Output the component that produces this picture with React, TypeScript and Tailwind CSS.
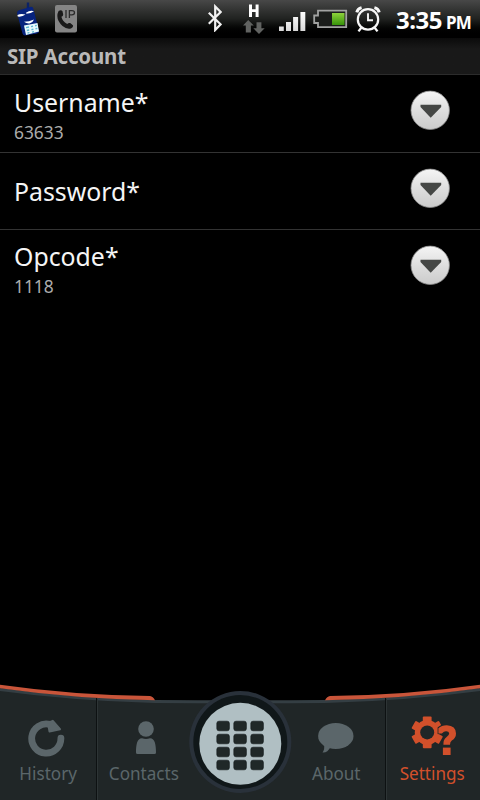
import type { ReactNode } from "react";

const rows = [
  { label: "Username*", value: "63633" },
  { label: "Password*", value: "" },
  { label: "Opcode*", value: "1118" },
];

function SoftphoneIcon() {
  return (
    <svg className="h-9 w-6" viewBox="0 0 24 36">
      <path d="M12 2.5 L12 11" stroke="#0c2266" strokeWidth="2.4" />
      <path d="M1 13 Q1 11 3 10.2 L15 6.8 Q17 6.6 17.3 8.5 L23 31 Q23 33 21 33.5 L9 35.5 Q7 35.5 6.5 33.5 Z" fill="#08237d" />
      <path d="M1.5 15 Q5 13.2 9.5 14.6 Q6 17.2 1.7 16.5 Z M10 12.7 Q14 10 18 11.2 Q15 13.6 10.5 13.8 Z" fill="#fff" />
      <path d="M8 21.8 Q13 21.6 18 19.4 Q17 22.4 13.5 23.5 Q10.5 23.8 8 21.8 Z" fill="#fff" />
      <path d="M8 25.4 L21.5 22.9 L23 31.5 L10 35 Z" fill="#e9fafc" />
      <path d="M10 27.6 l3-.6 M15 26.6 l2-.4 M19 25.8 l1.8-.4 M10.8 30.5 l2.4-.5 M15.4 29.6 l2-.4 M19.5 28.8 l1.8-.4 M11.5 33 l2-.4 M16 32.1 l2-.4" stroke="#5fb8d2" strokeWidth="1.4" />
    </svg>
  );
}

function IpCallIcon() {
  return (
    <svg className="h-7 w-[22px]" viewBox="0 0 22 28">
      <rect width="22" height="27.5" rx="2" fill="#858585" />
      <path d="M3.6 5.9 Q6 4.4 7.4 6 L8.2 9.4 Q8.2 11 6.4 11.8 Q7.2 16 12.2 19 Q13.6 17.4 15.2 18.1 L17.9 20.3 Q18.6 22 16.3 23.3 Q12.5 25 7.5 21 Q-.2 13.5 3.6 5.9Z" fill="#191919" />
      <path d="M11 5v8 M14.4 13V5.7 h2.5 q2.6 0 2.6 2 t-2.6 2.1 h-2.5" fill="none" stroke="#2b2b2b" strokeWidth="1.3" />
    </svg>
  );
}

function StatusBar() {
  return (
    <header className="flex h-[38px] shrink-0 items-start bg-linear-to-b from-[#484848] via-[#202220] via-50% to-black to-95%">
      <div className="ml-4">
        <SoftphoneIcon />
      </div>
      <div className="ml-[15px] mt-[5px]">
        <IpCallIcon />
      </div>
      <svg className="ml-[131px] mt-1 h-7 w-[14px]" viewBox="0 0 14 28" fill="none" stroke="#f2f2f2" strokeWidth="2.2">
        <path d="M.8 8.7 L12.6 20.3 L7.2 26 V2.5 L12.6 8 L.8 19.8" />
      </svg>
      <svg className="ml-[21px] mt-1 h-8 w-[22px]" viewBox="0 0 22 32">
        <path d="M6 .6h3v4.7h3.6V.6h3v12.4h-3V8H9V13H6z" fill="#fff" />
        <path d="M5.2 16 L10.8 21.5 H7.9 V28.5 H2.8 V21.5 H0z M13.5 18.3 h4.9 v6 h3.3 L16 30 10.3 24.3 h3.2z" fill="#616361" />
      </svg>
      <svg className="ml-[14px] mt-3 h-5 w-[27px]" viewBox="0 0 27 20">
        <defs>
          <linearGradient id="bars" x2="0" y2="1">
            <stop stopColor="#fff" />
            <stop offset="1" stopColor="#d8d8d8" />
          </linearGradient>
        </defs>
        <path d="M0 14.4h4.8v4.6H0z M7 10h5v9H7z M14.1 5h5V19h-5z M21.4 0h4.9v19h-4.9z" fill="url(#bars)" />
      </svg>
      <svg className="ml-[7px] mt-[9px] h-5 w-[35px]" viewBox="0 0 35 20">
        <defs>
          <linearGradient id="charge" x2="0" y2="1">
            <stop stopColor="#8ed23c" />
            <stop offset="1" stopColor="#37930a" />
          </linearGradient>
        </defs>
        <path d="M5 1.7 H33.2 V18.2 H5 V14 H1.2 V6.5 H5z" fill="#1b1d1b" stroke="#a2a3a2" strokeWidth="1.8" />
        <path d="M19 4h12.5v12H19z" fill="url(#charge)" />
      </svg>
      <svg className="ml-[7px] mt-[5px] h-7 w-[26px]" viewBox="0 0 26 28" fill="none" stroke="#f7f7f7">
        <circle cx="13" cy="14.4" r="10.2" strokeWidth="2.2" />
        <path d="M13 8.3v6.9h5" strokeWidth="1.9" />
        <path d="M6.3 22.7 L3.5 26.4 M19.7 22.7 L22.5 26.4" strokeWidth="2.3" />
        <path d="M1.8 7.4 Q2.6 3.6 6.6 2.6 M24.2 7.4 Q23.4 3.6 19.4 2.6" strokeWidth="3" />
      </svg>
      <div className="ml-[15px] mt-[2px] flex items-baseline whitespace-nowrap font-bold text-white">
        <span className="text-[24px] leading-9 tracking-[-0.5px]">3:35</span>
        <span className="ml-1 text-[17px] tracking-[-0.8px]">PM</span>
      </div>
    </header>
  );
}

function DropButton() {
  return (
    <svg className="h-10 w-10" viewBox="0 0 40 40">
      <defs>
        <linearGradient id="knob" x2="0" y2="1">
          <stop stopColor="#f5f5f5" />
          <stop offset=".55" stopColor="#dcdcdc" />
          <stop offset="1" stopColor="#cbcbcb" />
        </linearGradient>
      </defs>
      <circle cx="20.2" cy="20.3" r="19.2" fill="url(#knob)" stroke="#8d8d8d" strokeWidth=".8" />
      <path d="M10.5 14.8h20.7v2.2L20.7 27.8 10.5 17z" fill="#454745" />
    </svg>
  );
}

function NavItem({ label, active, children }: { label: string; active?: boolean; children: ReactNode }) {
  return (
    <button className={`flex h-full w-24 flex-col items-center ${active ? "text-[#d2502b]" : "text-[#5b666a]"}`}>
      <span className="mt-[29px] flex h-12 items-center justify-center">{children}</span>
      <span className="scale-x-[.925] whitespace-nowrap text-[18.5px] leading-6">{label}</span>
    </button>
  );
}

function Dialpad() {
  return (
    <svg className="h-[110px] w-24 overflow-visible" viewBox="0 0 96 110">
      <circle cx="48.3" cy="53" r="51" fill="#29313a" />
      <circle cx="48.3" cy="53" r="47" fill="#101719" />
      <circle cx="48.3" cy="54.8" r="41" fill="#b0bfc3" />
      {[0, 1, 2, 3].map((r) =>
        [0, 1, 2].map((c) => (
          <rect key={`${r}-${c}`} x={24.8 + c * 17} y={32.2 + r * 13} width="12.6" height="9.6" rx="2.2" fill="#202828" stroke="#111819" strokeWidth=".6" />
        )),
      )}
    </svg>
  );
}

function BottomNav() {
  return (
    <nav className="relative h-[116px] shrink-0">
      <svg className="absolute inset-0 h-full w-full" viewBox="0 0 480 116">
        <path d="M0 5 Q75 15 155 16.5 Q240 18 325 16.5 Q405 15 480 5 V116 H0Z" fill="#202627" />
        <path d="M0 5.5 Q75 15.5 155 17.5 Q240 18 325 17.5 Q405 15.5 480 5.5" fill="none" stroke="#343e43" strokeWidth="3" />
        <path d="M0 .7 Q72 11 150 12 Q153 12.3 155 16.3 Q75 14.8 0 4.3Z" fill="#c9553a" />
        <path d="M480 .7 Q408 11 330 12 Q327 12.3 325 16.3 Q405 14.8 480 4.3Z" fill="#c9553a" />
        <path d="M96.5 14v102 M385.5 14v102" stroke="#0d1112" />
        <path d="M97.5 15v101 M386.5 15v101" stroke="#2d3435" />
      </svg>
      <div className="relative flex h-full">
        <NavItem label="History">
          <svg className="-ml-1 h-10 w-10" viewBox="0 0 40 40">
            <path d="M24 7.4 A14.6 14.6 0 1 0 34.9 21.2" fill="none" stroke="currentColor" strokeWidth="6.8" strokeLinecap="round" />
            <path d="M26.8 3.8 L34 12.2 L23.5 14.6 L22 6z" fill="currentColor" stroke="currentColor" strokeWidth="2" strokeLinejoin="round" />
          </svg>
        </NavItem>
        <NavItem label="Contacts">
          <svg className="ml-[3px] mt-0.5 h-9 w-6" viewBox="0 0 24 36" fill="currentColor">
            <circle cx="12" cy="9" r="7.8" />
            <path d="M2 32.5 C2 25 3 18.2 8 18.2 Q12 19.6 16 18.2 C21 18.2 22 25 22 32.5 Q22 34 20.5 34 H3.5 Q2 34 2 32.5z" />
          </svg>
        </NavItem>
        <button className="mt-[5px] h-[110px] w-24">
          <Dialpad />
        </button>
        <NavItem label="About">
          <svg className="mt-0.5 h-9 w-10" viewBox="0 0 40 36" fill="currentColor">
            <ellipse cx="19.8" cy="16" rx="17.7" ry="13" />
            <path d="M8 24 Q9 29 6.5 32.5 Q11.5 33 14.5 27z" />
          </svg>
        </NavItem>
        <NavItem label="Settings" active>
          <svg className="h-12 w-12" viewBox="0 0 48 48">
            <g fill="currentColor">
              {[0, 60, 120].map((a) => (
                <rect key={a} x="14.8" y="3.6" width="8.8" height="31.6" rx="1" transform={`rotate(${a} 19.2 19.4)`} />
              ))}
              <circle cx="19.2" cy="19.4" r="12.4" />
            </g>
            <circle cx="19.2" cy="19.4" r="7" fill="#202627" />
            <path d="M29.6 21 V14.6 Q32.5 11.2 38.5 11.2 Q48.8 11.6 48.8 20.4 Q48.8 27 42.8 30 V43.6 H33.8 V28 L36 22z" fill="#202627" />
            <path d="M30.4 15.2 Q33.5 12.2 38.8 12.2 Q48 12.8 48 20.4 Q48 25 43.8 27.4 Q42 28.6 42 31.8 H35.4 Q35 26.4 38.6 23.9 Q41.4 22.2 41.2 20.3 Q40.8 18.2 38 18.3 Q36 18.4 33.8 20.4 H30.4z" fill="currentColor" />
            <path d="M34.9 34.6h7.7v7.4h-7.7z" fill="currentColor" />
          </svg>
        </NavItem>
      </div>
    </nav>
  );
}

export default function App() {
  return (
    <div className="flex h-[800px] w-[480px] flex-col overflow-hidden bg-black font-['Noto_Sans',sans-serif]">
      <StatusBar />
      <h1 className="flex h-[37px] shrink-0 items-center border-b border-[#2c2c2c] bg-linear-to-b from-[#0b0b0b] to-[#191919] to-30% pl-[7px] text-[20.5px] font-bold tracking-[-0.2px] text-[#b9b9b9]">
        SIP Account
      </h1>
      <main className="flex flex-1 flex-col">
        {rows.map((row, i) => (
          <section key={row.label} className={`flex items-start pl-[14px] pr-[30px] ${i < 2 ? "border-b border-[#333]" : ""} ${i === 0 ? "h-[78px]" : "h-[77px]"}`}>
            <div className={`flex-1 ${row.value ? (i === 2 ? "pt-[9px]" : "pt-[10px]") : "pt-[21px]"}`}>
              <div className="origin-left scale-x-[.955] text-[26px] leading-[34px] text-[#f5f5f5]">{row.label}</div>
              {row.value && <div className="mt-px origin-left scale-x-[.965] text-[18px] leading-6 text-[#acacac]">{row.value}</div>}
            </div>
            <div className={i === 0 ? "pt-[15px]" : "pt-[14.5px]"}>
              <DropButton />
            </div>
          </section>
        ))}
      </main>
      <BottomNav />
    </div>
  );
}
